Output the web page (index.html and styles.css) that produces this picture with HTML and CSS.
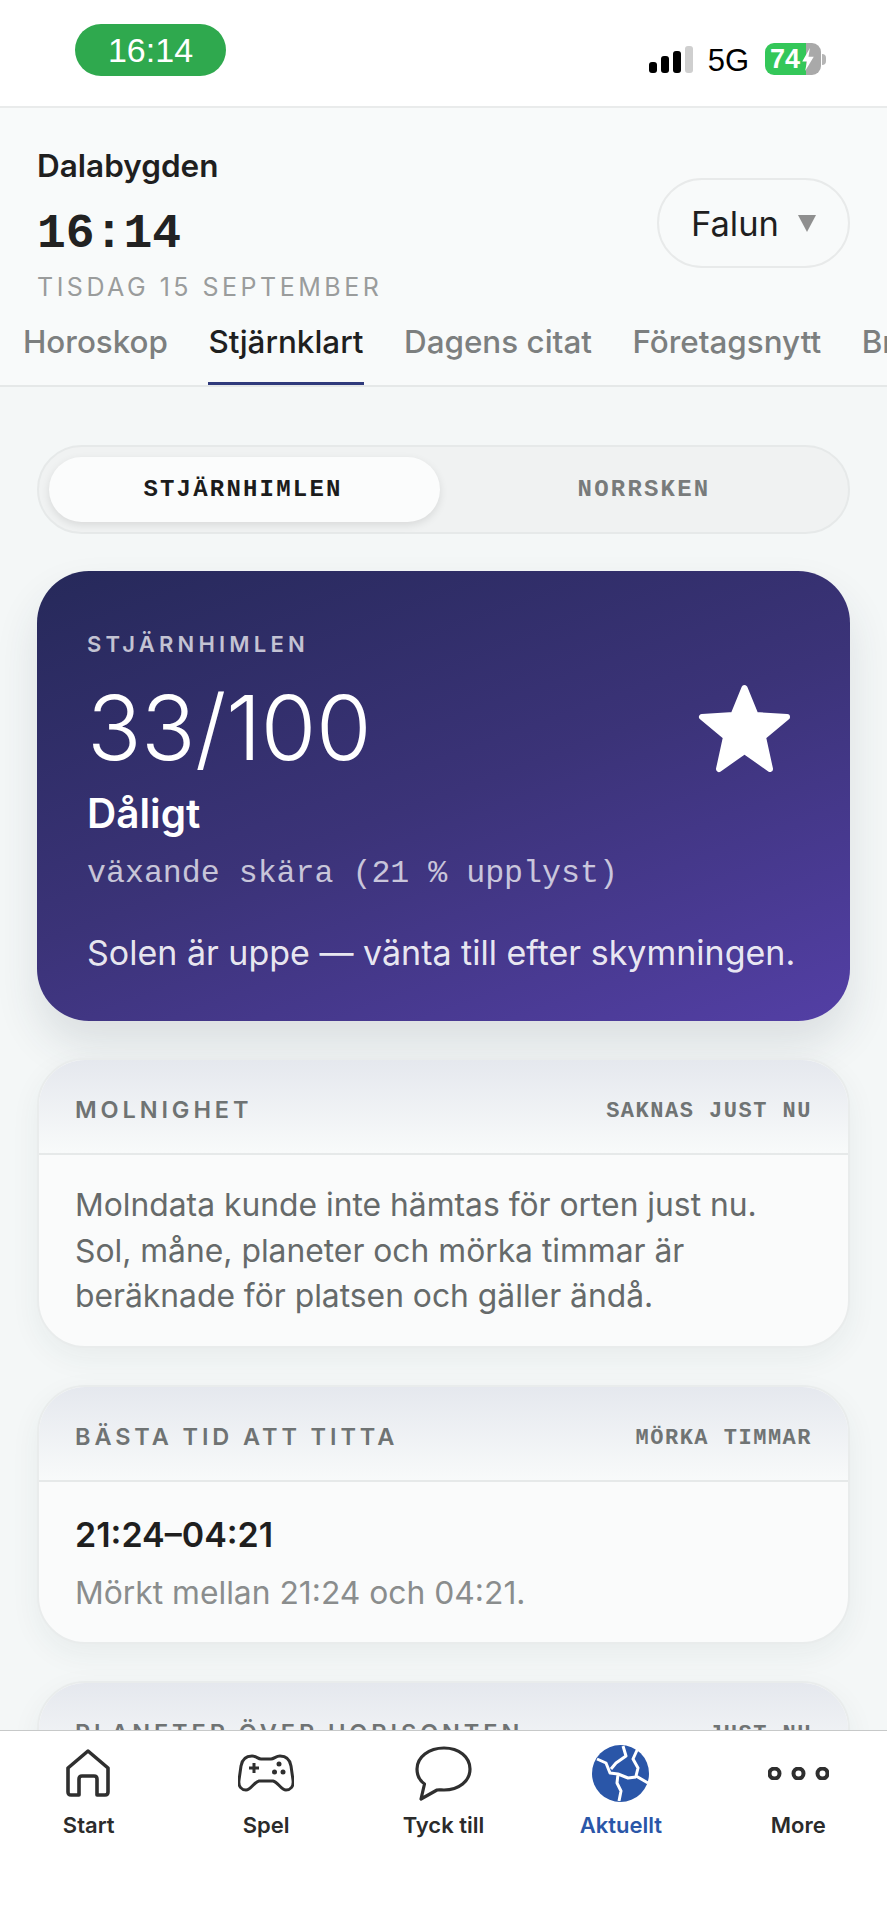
FILE: index.html
```html
<!DOCTYPE html>
<html lang="sv">
<head>
<meta charset="utf-8">
<title>Dalabygden</title>
<link rel="stylesheet" href="styles.css">
</head>
<body>
<div class="phone">
  <div class="status">
    <div class="clock-pill">16:14</div>
    <div class="status-right">
      <div class="signal"><i class="b1"></i><i class="b2"></i><i class="b3"></i><i class="b4"></i></div>
      <span class="net">5G</span>
      <div class="battery"><span>74</span>
        <svg class="bolt" viewBox="0 0 12 24"><path d="M8 0 0 14h5l-2 10 9-15H6.500z"/></svg>
      </div>
      <div class="nub"></div>
    </div>
  </div>

  <header class="head">
    <div class="head-top">
      <div class="head-left">
        <div class="brand">Dalabygden</div>
        <div class="time">16:14</div>
        <div class="date">TISDAG 15 SEPTEMBER</div>
      </div>
      <div class="city"><span>Falun</span><i class="caret"></i></div>
    </div>
    <nav class="tabs">
      <span class="tab">Horoskop</span>
      <span class="tab active">Stjärnklart</span>
      <span class="tab">Dagens citat</span>
      <span class="tab">Företagsnytt</span>
      <span class="tab">Brandrisk</span>
    </nav>
  </header>

  <main class="content">
    <div class="segment">
      <div class="seg on">STJÄRNHIMLEN</div>
      <div class="seg">NORRSKEN</div>
    </div>

    <section class="hero">
      <div class="hero-label">STJÄRNHIMLEN</div>
      <div class="hero-row">
        <div class="score">33/100</div>
        <svg class="star" viewBox="0 0 95 90"><path d="M47.500 5 58.500 32 90 34 66 54 73 86 47.500 68 22 86 29 54 5 34 36.500 32Z"/></svg>
      </div>
      <div class="verdict">Dåligt</div>
      <div class="moon">växande skära (21 % upplyst)</div>
      <div class="hint">Solen är uppe — vänta till efter skymningen.</div>
    </section>

    <section class="card">
      <div class="card-head"><span class="card-title">MOLNIGHET</span><span class="card-tag">SAKNAS JUST NU</span></div>
      <div class="card-body"><p class="para">Molndata kunde inte hämtas för orten just nu. Sol, måne, planeter och mörka timmar är beräknade för platsen och gäller ändå.</p></div>
    </section>

    <section class="card">
      <div class="card-head"><span class="card-title">BÄSTA TID ATT TITTA</span><span class="card-tag">MÖRKA TIMMAR</span></div>
      <div class="card-body"><div class="range">21:24–04:21</div><div class="sub">Mörkt mellan 21:24 och 04:21.</div></div>
    </section>

    <section class="card">
      <div class="card-head"><span class="card-title">PLANETER ÖVER HORISONTEN</span><span class="card-tag">JUST NU</span></div>
    </section>
  </main>

  <nav class="bottom">
    <div class="item">
      <div class="ico"><svg class="i-home" viewBox="0 0 44 48"><path d="M22 2 42 19V43q0 3-3 3H31V30q0-3-3-3H16q-3 0-3 3V46H5q-3 0-3-3V19Z"/></svg></div>
      <span>Start</span>
    </div>
    <div class="item">
      <div class="ico"><svg class="i-game" viewBox="0 0 56 38"><path d="M14 2C18 2 20 5 23 5H33C36 5 38 2 42 2 49 2 52 6 53 12L55 26C56 33 52 36 48 36 43 36 40 28 35 27H21C16 28 13 36 8 36 4 36 0 33 1 26L3 12C4 6 7 2 14 2Z"/><path d="M16 9V19M11 14H21"/><circle class="dot" cx="41" cy="10" r="2.500"/><circle class="dot" cx="36.500" cy="18" r="2.500"/><circle class="dot" cx="45" cy="18" r="2.500"/></svg></div>
      <span>Spel</span>
    </div>
    <div class="item">
      <div class="ico"><svg class="i-chat" viewBox="0 0 57 55"><path d="M6 53 9.500 38C4 34 2 29 2 23 2 11 14 2 29 2 44 2 55 11 55 23 55 35 44 44 29 44 26 44 24 43.500 22 44Z"/></svg></div>
      <span>Tyck till</span>
    </div>
    <div class="item current">
      <div class="ico"><svg class="i-globe" viewBox="0 0 57 57"><circle cx="28.500" cy="28.500" r="28.500"/><path d="M31 1 34 11 24 18 19 24M5 14 14 18 18 28 26 29 25 38 29 46 27 56M46 3 41 14 46 23 44 31 56 38M26 29 36 33 44 32"/></svg></div>
      <span>Aktuellt</span>
    </div>
    <div class="item">
      <div class="ico"><svg class="i-more" viewBox="0 0 61 13"><circle cx="6.500" cy="6.500" r="4.500"/><circle cx="30.500" cy="6.500" r="4.500"/><circle cx="54.500" cy="6.500" r="4.500"/></svg></div>
      <span>More</span>
    </div>
  </nav>
</div>
</body>
</html>
```

FILE: styles.css
```css
* { box-sizing: border-box; }
html, body { margin: 0; padding: 0; background: #f4f7f7; }
body { font-family: Inter, "Liberation Sans", sans-serif; }
.phone { position: relative; width: 887px; height: 1920px; overflow: hidden; background: #f4f7f7; }

/* status bar */
.status { height: 108px; background: #fff; border-bottom: 2px solid #e9ebeb; display: flex; justify-content: space-between; padding: 24px 61px 0 75px; }
.clock-pill { width: 151px; height: 52px; border-radius: 26px; background: #2fa94e; color: #fff; font: 34px/52px "Liberation Sans", sans-serif; text-align: center; }
.status-right { display: flex; align-items: center; height: 32px; margin-top: 19px; }
.signal { display: flex; align-items: flex-end; gap: 4px; height: 27px; margin-left: 1px; }
.signal i { display: block; width: 8px; border-radius: 3px; background: #000; }
.signal .b1 { height: 11px; }
.signal .b2 { height: 17px; }
.signal .b3 { height: 22px; }
.signal .b4 { height: 27px; background: #cfcfcf; }
.net { font: 31px/32px "Liberation Sans", sans-serif; color: #000; margin: 4px 16px 0 15px; }
.battery { position: relative; width: 56px; height: 32px; border-radius: 9px; background: linear-gradient(90deg, #34c759 0 73%, #a9a9a9 73% 100%); color: #fff; font: bold 27px/32px "Liberation Sans", sans-serif; padding-left: 5px; }
.bolt { position: absolute; left: 37px; top: 5px; width: 12px; height: 23px; fill: #fff; }
.nub { width: 4px; height: 11px; background: #b5b5b5; border-radius: 0 4px 4px 0; margin-left: 1px; }

/* header */
.head { background: #f8fafa; border-bottom: 2px solid #e5e8e8; height: 279px; display: flex; flex-direction: column; justify-content: space-between; }
.head-top { display: flex; justify-content: space-between; align-items: center; padding: 40px 37px 0; }
.brand { font-size: 31.500px; line-height: 36px; font-weight: 600; color: #1f1f1f; }
.time { font: bold 48px/56px "Liberation Mono", monospace; color: #222; margin-top: 22px; }
.date { font-size: 25px; line-height: 30px; color: #9a9c9c; letter-spacing: 3.500px; margin-top: 10px; }
.city { width: 193px; height: 90px; margin-top: -4px; border: 2px solid #e8eaea; border-radius: 45px; display: flex; align-items: center; justify-content: center; gap: 19px; font-size: 34.500px; color: #1f1f1f; }
.caret { width: 0; height: 0; border-left: 9px solid transparent; border-right: 9px solid transparent; border-top: 17px solid #8f8f8f; }
.tabs { display: flex; gap: 40.500px; padding-left: 23px; white-space: nowrap; overflow: hidden; height: 62px; }
.tab { display: block; height: 62px; font-size: 31.400px; line-height: 38px; font-weight: 500; color: #7c7f7f; }
.tab.active { color: #1f1f1f; border-bottom: 3px solid #2f3a7c; }

/* content */
.content { padding: 58px 37px 0; display: flex; flex-direction: column; gap: 37px; }
.segment { display: flex; height: 89px; padding: 10px; border: 2px solid #e6e9e9; border-radius: 45px; background: #f0f2f2; }
.seg { flex: 1; padding-left: 10px; border-radius: 34px; display: flex; align-items: center; justify-content: center; font: bold 24px "Liberation Mono", monospace; letter-spacing: 2.200px; color: #787b7b; }
.seg.on { flex: 0 0 391px; padding: 0 3px 0 0; background: #fbfcfc; color: #1c1c1c; box-shadow: 0 3px 8px rgba(0,0,0,.10); }

.hero { height: 450px; padding: 60px 50px 0 50px; border-radius: 52px; background: linear-gradient(160deg, #26295a 0%, #3b3378 50%, #533fa5 100%); color: #fff; box-shadow: 0 24px 44px rgba(40,60,70,.12); }
.hero-label { font-size: 22px; line-height: 26px; font-weight: 600; letter-spacing: 4.200px; color: rgba(255,255,255,.72); }
.hero-row { display: flex; justify-content: space-between; align-items: center; height: 104px; margin-top: 19px; }
.score { font-size: 90px; line-height: 104px; font-weight: 300; letter-spacing: -.5px; }
.star { width: 95px; height: 90px; fill: #fff; stroke: #fff; stroke-width: 6; stroke-linejoin: round; margin: 0 8px 0 0; }
.verdict { font-size: 40.500px; line-height: 50px; font-weight: 600; margin-top: 9px; }
.moon { font: 31.600px/40px "Liberation Mono", monospace; color: rgba(255,255,255,.72); margin-top: 15px; }
.hint { font-size: 34px; line-height: 40px; color: rgba(255,255,255,.9); margin-top: 39px; white-space: nowrap; }

.card { border-radius: 48px; border: 2px solid #e9ecec; background: #fafbfb; overflow: hidden; box-shadow: 0 10px 30px rgba(40,60,70,.06); }
.card-head { height: 95px; display: flex; justify-content: space-between; padding: 36px 36px 0; border-bottom: 2px solid #e6e9e9; background: linear-gradient(180deg, #e5e8ee 0%, #f8fafa 100%); }
.card-title { font-size: 23.500px; line-height: 28px; font-weight: 600; letter-spacing: 3.900px; color: #6f7373; }
.card-tag { font: bold 22px/28px "Liberation Mono", monospace; letter-spacing: 1.500px; color: #707474; margin-top: 2px; }
.card-body { padding: 27px 36px 27px; }
.para { margin: 0; font-size: 31.800px; line-height: 45.500px; color: #666a6a; }
.range { font-size: 34px; line-height: 44px; font-weight: 600; color: #1f1f1f; margin-top: 4px; }
.sub { font-size: 31.800px; line-height: 44px; color: #8a8d8d; margin-top: 14px; }

/* bottom bar */
.bottom { position: absolute; left: 0; right: 0; top: 1730px; bottom: 0; background: #fff; border-top: 1px solid #c7c9c9; display: grid; grid-template-columns: repeat(5, 1fr); }
.item { display: flex; flex-direction: column; align-items: center; font-size: 22px; font-weight: 600; color: #2b2b2b; }
.item.current { color: #2a56a8; }
.ico { height: 72px; display: flex; align-items: center; justify-content: center; margin-top: 6px; }
.item span { line-height: 30px; margin-top: 1px; }
.ico svg { display: block; fill: none; stroke: #2f2f2f; stroke-width: 3.600; stroke-linejoin: round; }
.i-home { width: 44px; height: 48px; margin-right: 2px; }
.i-game { width: 56px; height: 38px; }
.ico .i-game { stroke-width: 3; }
.i-game .dot { fill: #2f2f2f; stroke: none; }
.i-chat { width: 57px; height: 55px; }
.ico .i-chat { stroke-width: 3.200; }
.i-globe { width: 57px; height: 57px; }
.ico .i-globe { fill: none; stroke: #fff; stroke-width: 3; }
.i-globe circle { fill: #2a56a8; stroke: none; }
.i-more { width: 61px; height: 13px; }
.ico .i-more { stroke-width: 4; }
.i-more circle { r: 5px; }
```
